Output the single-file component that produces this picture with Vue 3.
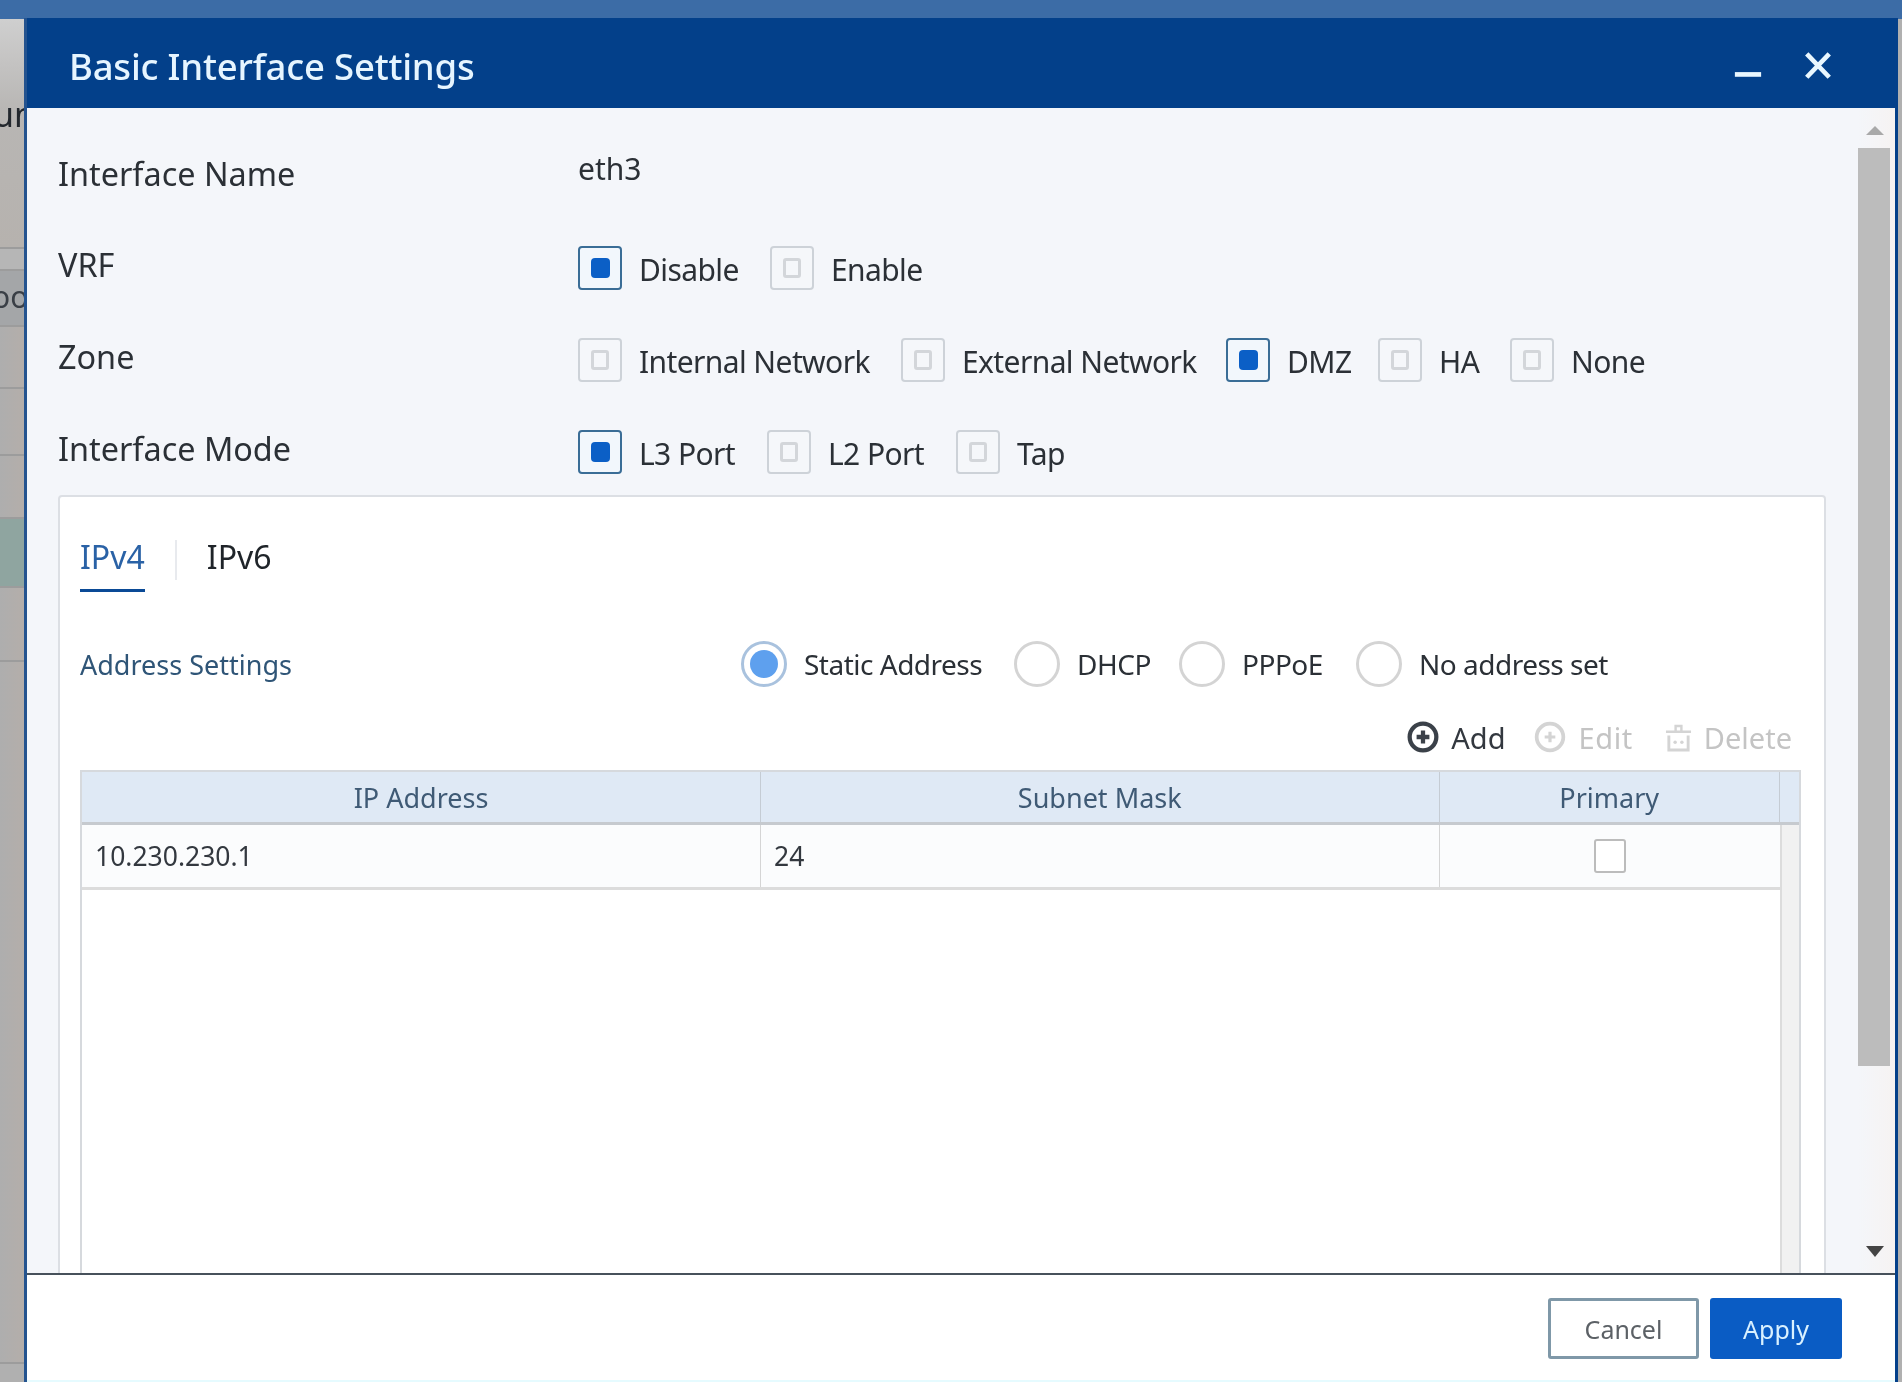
<script setup>
const vrf = [
  { label: 'Disable', on: true, w: 192 },
  { label: 'Enable', on: false, w: 160 }
]
const zones = [
  { label: 'Internal Network', on: false, w: 323 },
  { label: 'External Network', on: false, w: 325 },
  { label: 'DMZ', on: true, w: 152 },
  { label: 'HA', on: false, w: 132 },
  { label: 'None', on: false, w: 140 }
]
const modes = [
  { label: 'L3 Port', on: true, w: 189 },
  { label: 'L2 Port', on: false, w: 189 },
  { label: 'Tap', on: false, w: 120 }
]
const rows = [
  { title: 'VRF', options: vrf },
  { title: 'Zone', options: zones },
  { title: 'Interface Mode', options: modes }
]
const radios = [
  { label: 'Static Address', on: true, w: 273 },
  { label: 'DHCP', on: false, w: 165 },
  { label: 'PPPoE', on: false, w: 177 },
  { label: 'No address set', on: false, w: 260 }
]
const backdrop = [
  { h: 230, text: '', cls: 'bd-plain' },
  { h: 22, text: '', cls: 'bd-light' },
  { h: 56, text: 'oo', cls: 'bd-dark' },
  { h: 62, text: '', cls: '' },
  { h: 67, text: '', cls: '' },
  { h: 63, text: '', cls: '' },
  { h: 69, text: '', cls: 'bd-green' },
  { h: 74, text: '', cls: '' },
  { h: 702, text: '', cls: '' }
]
</script>

<template>
  <div class="page">
    <div class="topbar"></div>
    <div class="backdrop">
      <div
        v-for="(b, i) in backdrop"
        :key="i"
        class="bd-row"
        :class="b.cls"
        :style="{ height: b.h + 'px' }"
      >
        <span v-if="i === 0" class="bd-title">un</span>
        <span v-if="b.text" class="bd-text">{{ b.text }}</span>
      </div>
    </div>

    <section class="dialog">
      <header class="head">
        <h1 class="title">Basic Interface Settings</h1>
        <div class="win-btns">
          <svg class="win-icon" viewBox="0 0 32 32">
            <path d="M2 25H30" stroke="#e9f7ff" stroke-width="5" fill="none" />
          </svg>
          <svg class="win-icon" viewBox="0 0 32 32">
            <path d="M4 3L28 28M28 3L4 28" stroke="#e9f7ff" stroke-width="5" fill="none" />
          </svg>
        </div>
      </header>

      <div class="body">
        <div class="content">
          <div class="row row-name">
            <div class="label">Interface Name</div>
            <div class="value">eth3</div>
          </div>
          <div v-for="r in rows" :key="r.title" class="row">
            <div class="label">{{ r.title }}</div>
            <div class="options">
              <div
                v-for="o in r.options"
                :key="o.label"
                class="option"
                :style="{ width: o.w + 'px' }"
              >
                <span class="box" :class="{ on: o.on }"><i></i></span>
                <span class="opt-text">{{ o.label }}</span>
              </div>
            </div>
          </div>

          <div class="card">
            <div class="tabs">
              <div class="tab active">IPv4</div>
              <div class="tab-sep"></div>
              <div class="tab">IPv6</div>
            </div>

            <div class="addr">
              <div class="addr-label">Address Settings</div>
              <div class="radios">
                <div
                  v-for="r in radios"
                  :key="r.label"
                  class="radio"
                  :style="{ width: r.w + 'px' }"
                >
                  <span class="dot" :class="{ on: r.on }"><i></i></span>
                  <span class="radio-text">{{ r.label }}</span>
                </div>
              </div>
            </div>

            <div class="tools">
              <div class="tool tool-add">
                <svg class="tool-icon" viewBox="0 0 30 30">
                  <circle cx="15" cy="15" r="12.5" fill="none" stroke="#3b4149" stroke-width="4" />
                  <path d="M15 9V21M9 15H21" stroke="#3b4149" stroke-width="4" fill="none" />
                </svg>
                <span>Add</span>
              </div>
              <div class="tool off">
                <svg class="tool-icon" viewBox="0 0 30 30">
                  <circle cx="15" cy="15" r="12.5" fill="none" stroke="#d4d4d4" stroke-width="3.5" />
                  <path d="M15 10V20M10 15H20" stroke="#d4d4d4" stroke-width="3" fill="none" />
                </svg>
                <span class="edit-text">Edit</span>
              </div>
              <div class="tool off">
                <svg class="trash" viewBox="0 0 28 30">
                  <path d="M1 9H27M11 8V3H17V8" stroke="#d4d4d4" stroke-width="2.5" fill="none" />
                  <path d="M4 13V28H24V13" stroke="#d4d4d4" stroke-width="3" fill="none" />
                  <circle cx="10.5" cy="20" r="1.8" fill="#d4d4d4" />
                  <circle cx="17.5" cy="20" r="1.8" fill="#d4d4d4" />
                </svg>
                <span>Delete</span>
              </div>
            </div>

            <div class="grid">
              <div class="g-head">
                <div class="g-th">IP Address</div>
                <div class="g-th">Subnet Mask</div>
                <div class="g-th">Primary</div>
                <div class="g-th g-end"></div>
              </div>
              <div class="g-body">
                <div class="g-main">
                  <div class="g-row">
                    <div class="g-td">10.230.230.1</div>
                    <div class="g-td">24</div>
                    <div class="g-td g-check"><span class="check"></span></div>
                  </div>
                </div>
                <div class="g-strip"></div>
              </div>
            </div>
          </div>
        </div>

        <div class="scroll">
          <span class="arrow up"></span>
          <div class="thumb"></div>
          <span class="arrow down"></span>
        </div>
      </div>

      <footer class="foot">
        <button class="btn cancel">Cancel</button>
        <button class="btn apply">Apply</button>
      </footer>
    </section>
  </div>
</template>

<style>
html, body { margin: 0; padding: 0; background: #b0b0b0; }
</style>

<style scoped>
.page {
  position: relative;
  width: 1902px;
  height: 1382px;
  overflow: hidden;
  background: #b0b0b0;
  font-family: "Noto Sans", "Open Sans", sans-serif;
  color: #2b3036;
  filter: blur(0.5px);
}
.topbar { height: 19px; background: #3c6ca6; }

.backdrop { width: 24px; overflow: hidden; background: linear-gradient(90deg, #aeaeae, #b4aeaa); }
.bd-row { box-sizing: border-box; border-bottom: 2px solid #9c9c9c; position: relative; overflow: hidden; white-space: nowrap; }
.bd-plain { background: linear-gradient(180deg, #cfcfcf, #b8b6b4 40%, #b6b2ae); }
.bd-light { background: #b6b6b6; }
.bd-dark { background: #a4a6a8; }
.bd-green { background: #8fa5a0; }
.bd-title { position: absolute; left: -7px; top: 72px; font-size: 34px; color: #23282e; }
.bd-text { position: absolute; left: -8px; top: 5px; font-size: 30px; color: #3a3f46; }

.dialog {
  position: absolute;
  left: 24px;
  top: 18px;
  width: 1874px;
  height: 1364px;
  box-sizing: border-box;
  display: flex;
  flex-direction: column;
  border-left: 3px solid #24538f;
  border-right: 3px solid #04408a;
}

.head {
  height: 90px;
  flex: none;
  display: flex;
  align-items: center;
  justify-content: space-between;
  background: #03408a;
  padding: 6px 62px 0 42px;
  box-sizing: border-box;
}
.title { margin: 0; font-size: 36.5px; font-weight: 500; color: #e6f5ff; letter-spacing: -0.2px; }
.win-btns { display: flex; gap: 40px; }
.win-icon { width: 30px; height: 30px; display: block; }

.body { flex: 1; min-height: 0; display: flex; background: #f4f6fa; overflow: hidden; }
.content { flex: 1; min-width: 0; padding: 19px 32px 0 31px; }

.row { display: flex; align-items: center; height: 92px; }
.row-name { margin-bottom: 3px; }
.label { width: 520px; flex: none; font-size: 32.4px; padding-bottom: 8px; color: #2b3036; }
.row-name .label { padding-bottom: 0; }
.value { font-size: 30px; padding-bottom: 10px; color: #2b3036; }

.options { display: flex; }
.option { display: flex; align-items: center; gap: 17px; flex: none; }
.opt-text { font-size: 30px; letter-spacing: -0.6px; color: #2b3036; white-space: nowrap; padding-top: 2px; }
.box {
  width: 44px;
  height: 44px;
  box-sizing: border-box;
  flex: none;
  display: flex;
  align-items: center;
  justify-content: center;
  border: 2px solid #cdd2d8;
  border-radius: 4px;
  background: #f5f7fa;
}
.box i { width: 18px; height: 20px; box-sizing: border-box; border: 3px solid #d3d6da; border-radius: 3px; }
.box.on { border-color: #3a6d96; background: #f2f7fc; }
.box.on i { width: 19px; background: #0b5fc6; border: none; border-radius: 4px; }

.card {
  margin-top: -3px;
  background: #fff;
  border: 2px solid #dcdfe4;
  border-radius: 4px 4px 0 0;
  height: 900px;
  padding: 0 24px 0 20px;
  box-sizing: border-box;
}
.tabs { display: flex; align-items: center; height: 95px; }
.tab { font-size: 32px; color: #1f2429; height: 95px; box-sizing: border-box; padding-top: 36px; line-height: 48px; }
.tab.active { color: #2a62a6; box-shadow: inset 0 -3px 0 #0a4a96; }
.tab-sep { width: 2px; height: 40px; margin: 30px 30px 0; background: #e8eaee; }

.addr { display: flex; align-items: center; margin-top: 49px; height: 46px; }
.addr-label { width: 661px; flex: none; font-size: 27px; color: #2f5577; }
.radios { display: flex; }
.radio { display: flex; align-items: center; gap: 17px; flex: none; }
.radio-text { font-size: 28px; letter-spacing: -0.5px; color: #2b3036; white-space: nowrap; }
.dot {
  width: 46px;
  height: 46px;
  flex: none;
  box-sizing: border-box;
  border: 3px solid #d4d4d4;
  border-radius: 50%;
  display: flex;
  align-items: center;
  justify-content: center;
  background: #fff;
}
.dot.on { border-color: #a9c2de; }
.dot.on i { width: 28px; height: 28px; border-radius: 50%; background: #5ea0ee; }

.tools { display: flex; justify-content: flex-end; gap: 32px; height: 50px; margin-top: 25px; margin-right: 8px; align-items: center; }
.tool { display: flex; align-items: center; gap: 12px; font-size: 29px; color: #33383f; }
.tool-add { margin-right: -3px; }
.tool.off { color: #c4c4c4; }
.tool-icon { width: 32px; height: 32px; display: block; }
.trash { width: 27px; height: 31px; display: block; }
.edit-text { letter-spacing: 0.6px; }

.grid { margin-top: 8px; width: 1721px; height: 530px; box-sizing: border-box; border: 2px solid #d6d9dd; border-bottom: none; display: flex; flex-direction: column; }
.g-head { display: grid; grid-template-columns: 679px 678.5px 340.5px 1fr; height: 53px; background: #dfe9f5; border-bottom: 3px solid #c6cacf; box-sizing: border-box; flex: none; }
.g-th { font-size: 27px; color: #3f5a75; display: flex; align-items: center; justify-content: center; border-right: 1px solid #c5ccd4; }
.g-th.g-end { border-right: none; }
.g-body { flex: 1; display: flex; min-height: 0; }
.g-main { flex: 1; background: #fff; }
.g-strip { width: 19px; box-sizing: border-box; background: #f1f1f1; border-left: 2px solid #dcdcdc; }
.g-row { display: grid; grid-template-columns: 679px 678.5px 1fr; height: 65px; box-sizing: border-box; background: #fbfcfd; border-bottom: 3px solid #dcdcdc; }
.g-td { font-size: 26.5px; color: #33383f; display: flex; align-items: center; padding-left: 13px; border-right: 1px solid #d5d5d5; }
.g-check { justify-content: center; padding-left: 0; border-right: none; }
.check { width: 32px; height: 34px; box-sizing: border-box; border: 2px solid #bcbcbc; border-radius: 3px; background: #fff; }

.scroll { width: 37px; flex: none; display: flex; flex-direction: column; padding: 18px 0 16px; box-sizing: border-box; background: linear-gradient(90deg, #f4f6fa, #f6f3f2); }
.arrow { width: 0; height: 0; margin-left: 8px; border-left: 9px solid transparent; border-right: 9px solid transparent; flex: none; }
.arrow.up { border-bottom: 9px solid #a9a9a9; }
.arrow.down { border-top: 11px solid #444; margin-top: auto; }
.thumb { width: 32px; height: 918px; margin-top: 13px; background: #bcbcbc; flex: none; }

.foot {
  flex: none;
  height: 109px;
  box-sizing: border-box;
  background: #fff;
  border-top: 2px solid #47515b;
  border-bottom: 2px solid #e6fbff;
  display: flex;
  justify-content: flex-end;
  gap: 11px;
  padding: 23px 53px 0 0;
}
.btn { height: 61px; font-family: inherit; font-size: 25px; border-radius: 3px; box-sizing: border-box; padding: 0; }
.cancel { width: 151px; background: #fff; border: 3px solid #7f98a8; color: #5c6166; }
.apply { width: 132px; background: #0a5cc4; border: none; color: #d9f1ff; }
</style>
